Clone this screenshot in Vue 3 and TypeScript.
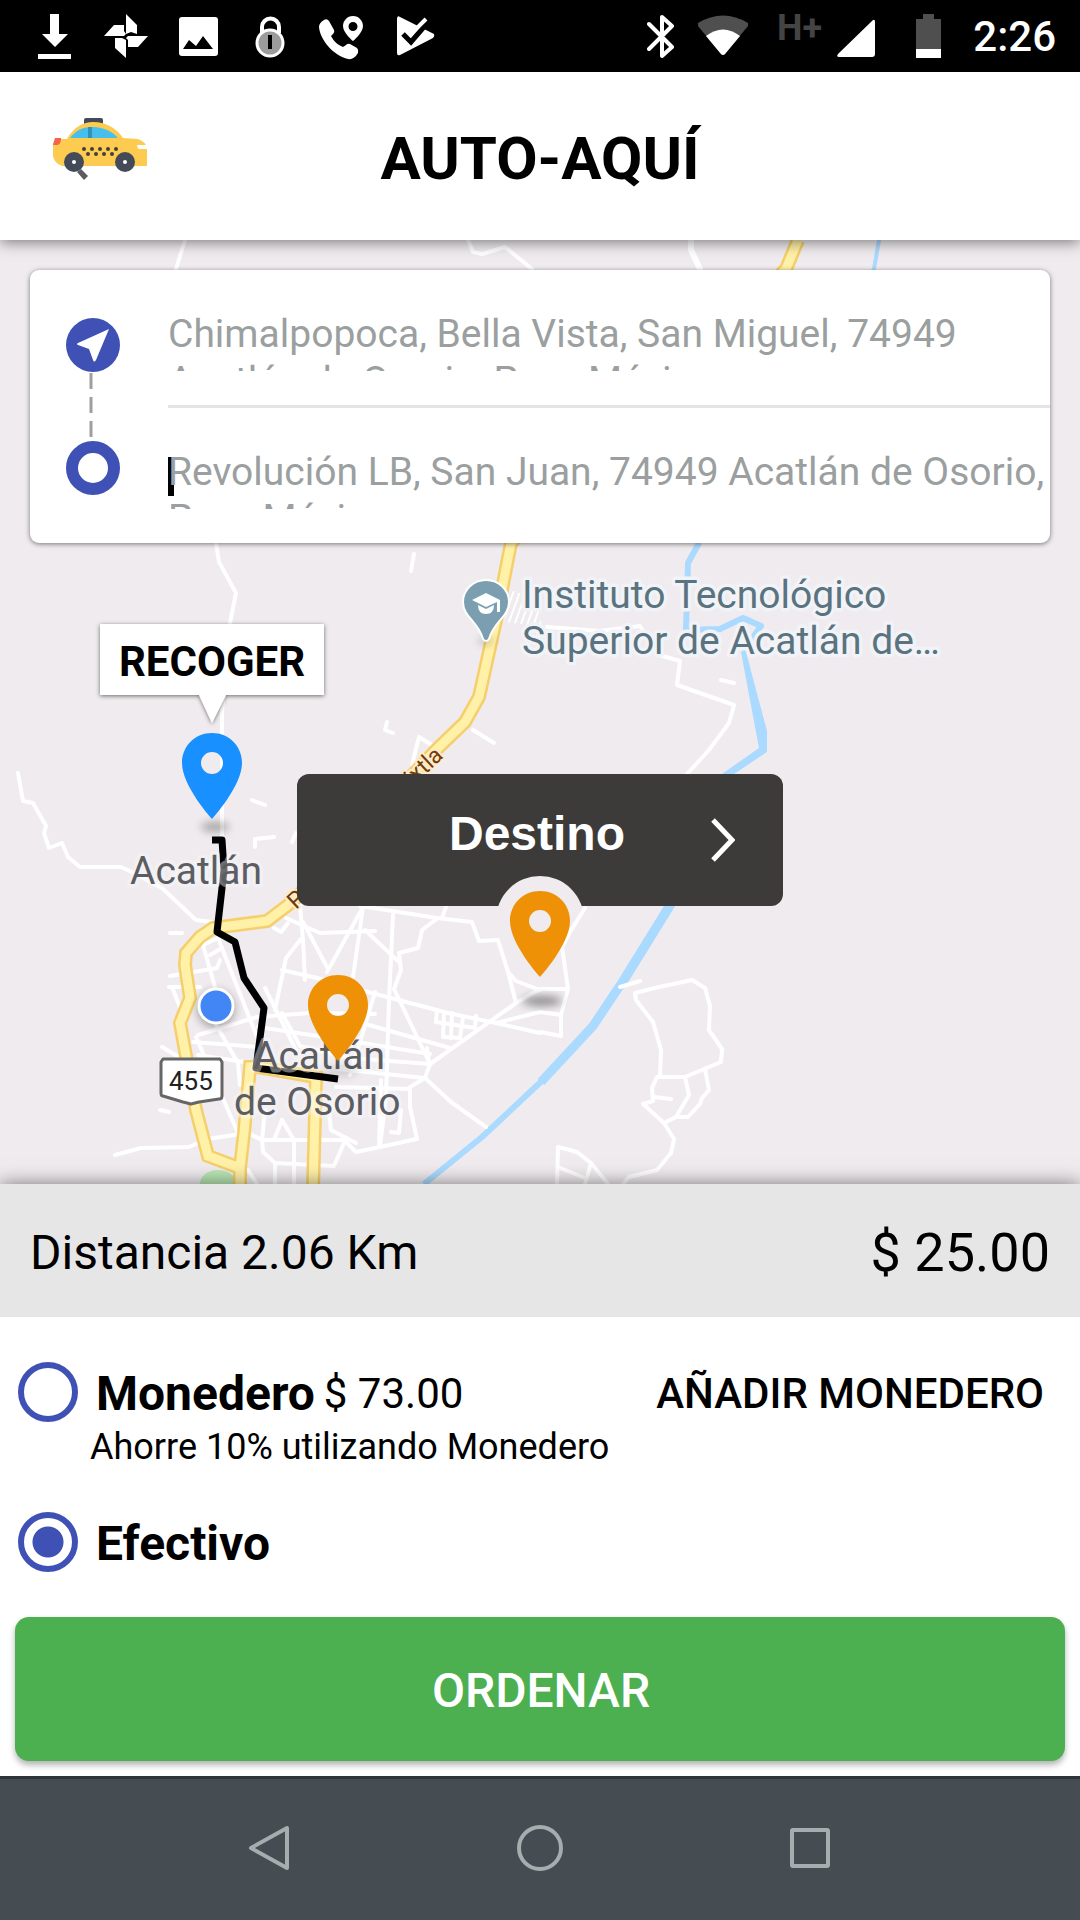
<script setup lang="ts">
import { ref } from 'vue'

type Payment = 'wallet' | 'cash'

const pickup = ref('Chimalpopoca, Bella Vista, San Miguel, 74949 Acatlán de Osorio, Pue., México')
const dropoff = ref('Revolución LB, San Juan, 74949 Acatlán de Osorio, Pue., México')
const payment = ref<Payment>('cash')

const pinShape =
  'M30 0C13 0 0 13 0 30c0 23 30 56 30 56s30-33 30-56C60 13 47 0 30 0zM30 19a11 11 0 1 1 0 22a11 11 0 1 1 0-22z'

// Minor streets, in map coordinates
const streets: string[] = [
  '185,240 176,269',
  '468,240 473,252 482,254 505,247 532,269',
  '216,543 219,562 236,593 230,623 222,713 222,847',
  '414,554 411,571',
  '18,773 23,801 33,803 46,826 44,833 49,848 62,843 68,857 80,867 121,867 138,875 162,888 196,920 212,922',
  '387,722 385,730 393,733',
  '412,765 419,737 435,747',
  '473,730 494,743',
  '252,800 265,805',
  '255,847 255,839 274,837',
  '292,842 296,833',
  '547,627 600,631 640,626 659,655 680,661 677,685 734,705 729,723 709,750 687,774',
  '721,680 734,683',
  '635,993 659,987 692,980 705,988 710,1006 709,1030 722,1049 721,1062 685,1077 660,1077 661,1050 653,1022 636,1000 635,993',
  '660,1077 657,1077 652,1088 653,1101 643,1104 664,1123 674,1139 671,1153 657,1170 629,1177 623,1184',
  '685,1077 689,1095 676,1117 664,1123',
  '705,1069 709,1090 702,1098 700,1104 688,1117 676,1117',
  '654,1097 671,1099',
  '620,987 640,981',
  '557,1184 558,1147 577,1152 591,1163 608,1184',
  '558,1167 585,1178',
  '591,1163 585,1184',
  '585,908 570,932 562,947 568,989 561,1015 561,1036 540,1032',
  '516,1003 540,989 568,989',
  '496,1023 540,1012 561,1015',
  '360,906 437,918 472,922 479,941 498,940 508,972 516,1003 430,1064',
  '508,972 516,981 540,990',
  '438,918 422,930 418,948 399,953 401,970 394,989 430,1064',
  '446,907 442,918',
  '286,918 320,933 375,931',
  '300,906 303,940 305,980',
  '303,922 327,967',
  '363,907 327,972',
  '363,907 353,977',
  '365,930 399,962',
  '393,915 389,1000 386,1097 380,1147',
  '301,939 286,958 275,1010',
  '282,970 317,978 368,992 448,1013 496,1023 540,1033',
  '265,988 296,1050',
  '169,987 200,987',
  '170,976 217,968 220,960',
  '170,933 182,933',
  '172,987 181,1010',
  '203,945 215,987',
  '203,945 218,938 257,1037',
  '210,955 222,948',
  '198,1035 257,1017 310,1013 375,1014',
  '193,1042 258,1047',
  '198,1055 251,1063',
  '215,1023 238,1063 240,1085',
  '162,1047 179,1057',
  '196,1037 238,1133',
  '160,1110 169,1112',
  '115,1155 141,1148 189,1147 207,1139 248,1133 262,1140 344,1140 356,1152 380,1147 417,1139 410,1107 410,1087 425,1078 430,1064',
  '425,1078 451,1102 486,1127',
  '339,1069 424,1078',
  '336,1087 410,1089',
  '262,1140 263,1152 275,1163 334,1166 344,1143',
  '275,1163 275,1184',
  '294,1140 294,1184',
  '282,1120 274,1140',
  '282,1120 294,1140',
  '265,1110 262,1140',
  '381,1080 379,1147',
  '329,1113 331,1130 356,1143',
  '258,1027 344,1040 430,1054',
  '282,1013 300,1046 350,1058 430,1064',
  '362,1023 450,1048',
  '375,992 350,1075',
  '437,1010 436,1022 475,1028 476,1016',
  '444,1013 443,1037 460,1038 463,1017',
  '452,1013 451,1038',
  '427,1048 429,1064',
  '391,1132 399,1133 401,1110',
  '248,1170 257,1184',
  '274,928 281,932 288,923',
]

const highways: string[] = [
  '798,240 786,269 511,543 496,620 479,697 465,722 436,750 296,898 288,905 267,921 213,928 200,937 186,953 185,965 190,998 180,1023 188,1067 196,1110 208,1156 240,1168',
  '240,1190 240,1168 244,1133 250,1067 258,1067 316,1077 313,1190',
]
</script>

<template>
  <div class="screen">
    <div class="status">
      <div class="notices">
        <svg class="notice" viewBox="0 0 48 48"><path d="M20 2h9v20h9L25 35 12 22h8zM8 42h33v5H8z" /></svg>
        <svg class="notice" viewBox="0 0 48 48"><path d="M24 2l11 11v9l-6-2-5 2zM2 24l10-11h10v6l2 3-2 2zM26 24h20L36 35H26v-7l-2-2zM13 26h7l4 2v18L13 36z" /></svg>
        <svg class="notice" viewBox="0 0 48 48"><path fill-rule="evenodd" d="M8 5h33q3 0 3 3v33q0 3-3 3H8q-3 0-3-3V8q0-3 3-3zM9 37h30L29 24l-7 10-7-6z" /></svg>
        <svg class="notice" viewBox="0 0 48 48">
          <path d="M16 21v-6a8 8 0 0 1 17 0v6" fill="none" stroke="#fff" stroke-width="4" />
          <circle cx="24" cy="31" r="13" fill="#9c9c9c" stroke="#fff" stroke-width="3" />
          <path d="M22 23h4v14h-4z" fill="#000" />
        </svg>
        <svg class="notice" viewBox="0 0 48 48">
          <path d="M6 8Q9 6 11 9l5 9q1 2-1 4l-2 2q4 8 12 11l3-2q2-2 4-1l7 4q2 2 1 5-4 7-10 6C16 44 2 28 1 15q0-4 5-7z" />
          <path fill-rule="evenodd" d="M35 4c6 0 10 5 10 10 0 7-10 15-10 15s-10-8-10-15c0-5 4-10 10-10zm0 6a4 4 0 1 0 0 9a4 4 0 1 0 0-9z" />
        </svg>
        <svg class="notice" viewBox="0 0 48 48">
          <path d="M7 7q0-4 3-2l34 17q1 2-1 4L10 43q-3 1-3-2z" />
          <path d="M28 5h20v13h-9z" fill="#000" />
          <path d="M13 22l8 8 18-21" fill="none" stroke="#000" stroke-width="5" />
          <path d="M19 18l3 3L36 7" fill="none" stroke="#fff" stroke-width="4" />
        </svg>
      </div>
      <div class="system">
        <svg width="28" height="48" viewBox="0 0 28 48"><path d="M2 12l23 23-10 9V5l10 9L2 37" fill="none" stroke="#fff" stroke-width="4" stroke-linejoin="round" stroke-linecap="round" /></svg>
        <svg width="52" height="48" viewBox="0 0 52 48">
          <path d="M1 11Q26-4 51 11v3L28 42q-2 2-4 0L1 14z" fill="#4f4f4f" />
          <path d="M9 24q17-13 34 0L28 42q-2 2-4 0z" />
        </svg>
        <svg width="122" height="72" viewBox="0 0 122 72">
          <text x="6" y="40" class="network">H+</text>
          <path d="M102 20q2-1 2 2v32q0 3-3 3H68q-3 0-1-3z" />
        </svg>
        <svg width="26" height="48" viewBox="0 0 26 48">
          <path d="M8 2h11v5h7v31H1V7h7z" fill="#4f4f4f" />
          <path d="M1 37h25v9H1z" />
        </svg>
        <time class="clock">2:26</time>
      </div>
    </div>

    <header class="header">
      <svg class="taxi" viewBox="0 0 96 64" role="img" aria-label="Taxi">
        <path d="M25 55l4-3 7 7-4 4z" fill="#5b5b60" />
        <rect x="32" y="1" width="19" height="8" rx="2" fill="#414a56" />
        <path d="M15 22C22 10 31 5 41 5c14 0 24 7 30 16l15 1q8 3 9 9v18H10q-8-3-9-10V26l3-4z" fill="#fdcb4f" />
        <path d="M18 21C24 13 31 10 41 10c11 0 20 5 25 11z" fill="#46bfec" />
        <path d="M36 10h4v11h-4z" fill="#3192b8" />
        <path d="M3 21h6q0 7-4 7H1z" fill="#f4614c" />
        <path d="M85 28h10v4H87q-2-1-2-4z" fill="#fff" />
        <g fill="#413f3d">
          <circle cx="32" cy="32" r="2" /><circle cx="40" cy="32" r="2" /><circle cx="48" cy="32" r="2" /><circle cx="56" cy="32" r="2" /><circle cx="64" cy="32" r="2" />
          <circle cx="36" cy="37" r="2" /><circle cx="44" cy="37" r="2" /><circle cx="52" cy="37" r="2" /><circle cx="60" cy="37" r="2" />
        </g>
        <circle cx="22" cy="45" r="10" fill="#434b58" /><circle cx="22" cy="45" r="2" fill="#fff" />
        <circle cx="73" cy="45" r="10" fill="#434b58" /><circle cx="73" cy="45" r="2" fill="#fff" />
      </svg>
      <h1 class="title">AUTO-AQUÍ</h1>
    </header>

    <main class="map">
      <svg class="canvas" viewBox="0 240 1080 944" preserveAspectRatio="xMidYMin slice">
        <defs>
          <filter id="soft" x="-50%" y="-100%" width="200%" height="300%"><feGaussianBlur stdDeviation="4" /></filter>
          <filter id="lift" x="-20%" y="-20%" width="140%" height="140%"><feDropShadow dx="0" dy="1" stdDeviation="2" flood-opacity="0.55" /></filter>
          <pattern id="hatch" width="6" height="6" patternUnits="userSpaceOnUse" patternTransform="rotate(20)">
            <path d="M0 0v6" stroke="#fff" stroke-width="4" />
          </pattern>
        </defs>
        <ellipse cx="218" cy="1184" rx="18" ry="14" fill="#b9e6b4" />
        <path d="M510 590l26 8 6 28-38-4z" fill="url(#hatch)" />
        <g class="river">
          <polyline points="879,240 874,269 699,543" stroke-width="4" />
          <polyline points="699,543 688,563 686,630 720,629 743,618 761,626 743,652" stroke-width="6" />
          <path d="M741 652h5l21 79v21l-33 22h-12l37-26z" fill="#aadaff" stroke="none" />
          <polyline points="728,774 670,906 623,982" stroke-width="9" />
          <polyline points="668,908 621,984 593,1026 541,1082" stroke-width="9" />
          <polyline points="545,1078 482,1137 424,1184" stroke-width="6" />
        </g>
        <polyline points="691,240 691,250 700,269" class="street" stroke-width="6" />
        <polyline v-for="(line, i) in streets" :key="i" :points="line" class="street" stroke-width="4" />
        <polyline v-for="line in highways" :key="'edge' + line" :points="line" class="highway-edge" />
        <polyline v-for="line in highways" :key="line" :points="line" class="highway" />

        <g class="road-name">
          <text transform="translate(413 786) rotate(-43)">ixtla</text>
          <text transform="translate(296 910) rotate(-43)">P</text>
        </g>
        <polyline class="route" points="212,840 222,840 224,870 222,888 217,932 235,942 244,978 264,1008 256,1068 338,1079" />

        <g class="place">
          <text x="130" y="884">Acatlán</text>
          <text x="253" y="1069">Acatlán</text>
          <text x="234" y="1115">de Osorio</text>
        </g>
        <g class="school">
          <text x="522" y="608">Instituto Tecnológico</text>
          <text x="522" y="654">Superior de Acatlán de…</text>
        </g>

        <ellipse cx="486" cy="641" rx="8" ry="3" fill="#000" opacity="0.25" filter="url(#soft)" />
        <path d="M486 580c13 0 23 10 23 22 0 15-15 19-20 37q-3 4-6 0c-5-18-20-22-20-37 0-12 10-22 23-22z" fill="#7b9fb0" stroke="#fff" stroke-width="2" />
        <path d="M472 600l14-7 14 7v12h-3v-10l-11 5zM478 605l8 4 8-4q0 9-8 9t-8-9z" fill="#fff" />

        <path d="M163 1059h57l2 3v34q0 3-3 3l-20 3-8 2-8-2-20-6q-2 0-2-3v-31z" fill="#fff" stroke="#666" stroke-width="3" stroke-linejoin="round" />
        <text x="169" y="1090" class="shield">455</text>

        <circle cx="216" cy="1009" r="19" opacity="0.3" filter="url(#soft)" />
        <circle cx="216" cy="1006" r="17" fill="#4285f4" stroke="#fff" stroke-width="3" />

        <ellipse cx="340" cy="1071" rx="18" ry="5" opacity="0.15" filter="url(#soft)" />
        <path :d="pinShape" transform="translate(308 975)" fill="#ee9106" fill-rule="evenodd" />

        <ellipse cx="215" cy="827" rx="14" ry="5" opacity="0.3" filter="url(#soft)" />
        <path :d="pinShape" transform="translate(182 733)" fill="#1890ff" fill-rule="evenodd" />
        <path d="M100 624h224v71h-98l-14 28-13-28h-99z" fill="#fff" filter="url(#lift)" />
        <text x="212" y="676" text-anchor="middle" class="callout">RECOGER</text>
      </svg>

      <form class="trip" @submit.prevent>
        <div class="rail">
          <svg class="stop" viewBox="0 0 54 54">
            <circle cx="27" cy="27" r="27" fill="#3f51b5" />
            <path d="M43 11L30 42q-2 3-3 0l-4-11-11-4q-2-1 0-2z" fill="#fff" />
          </svg>
          <svg class="dashes" viewBox="0 0 54 69"><path d="M25 1v16M25 25v16M25 49v16" stroke="#9e9e9e" stroke-width="3" /></svg>
          <svg class="stop" viewBox="0 0 54 54"><circle cx="27" cy="27" r="21" fill="#fff" stroke="#3f51b5" stroke-width="12" /></svg>
        </div>
        <div class="fields">
          <div class="field"><textarea v-model="pickup" aria-label="Origen" spellcheck="false"></textarea></div>
          <div class="field focused"><textarea v-model="dropoff" aria-label="Destino" spellcheck="false"></textarea></div>
        </div>
      </form>

      <button class="destination" type="button">
        Destino
        <svg class="chevron" viewBox="0 0 24 44"><path d="M2 2l19 20L2 42" fill="none" stroke="#fff" stroke-width="5" /></svg>
      </button>
      <svg class="center-pin" viewBox="0 0 80 120">
        <ellipse cx="42" cy="110" rx="20" ry="5" opacity="0.4" filter="url(#soft)" />
        <path :d="pinShape" transform="translate(10 0)" fill="#ee9106" fill-rule="evenodd" />
      </svg>
    </main>

    <section class="fare">
      <span class="distance">Distancia 2.06 Km</span>
      <span class="price">$ 25.00</span>
    </section>

    <section class="payment">
      <div class="option">
        <input id="wallet" v-model="payment" type="radio" name="payment" value="wallet" />
        <label for="wallet">Monedero</label>
        <span class="balance">$ 73.00</span>
        <button class="add" type="button">AÑADIR MONEDERO</button>
      </div>
      <p class="hint">Ahorre 10% utilizando Monedero</p>
      <div class="option">
        <input id="cash" v-model="payment" type="radio" name="payment" value="cash" />
        <label for="cash">Efectivo</label>
      </div>
      <button class="order" type="button">ORDENAR</button>
    </section>

    <nav class="nav">
      <button type="button" aria-label="Atrás"><svg viewBox="0 0 48 48"><path d="M41 4v40L5 24z" /></svg></button>
      <button type="button" aria-label="Inicio"><svg viewBox="0 0 48 48"><circle cx="24" cy="24" r="21" /></svg></button>
      <button type="button" aria-label="Recientes"><svg viewBox="0 0 48 48"><rect x="6" y="6" width="36" height="36" rx="1" /></svg></button>
    </nav>
  </div>
</template>

<style>
body {
  margin: 0;
}
</style>

<style scoped>
.screen {
  display: flex;
  flex-direction: column;
  min-height: 100vh;
  overflow: hidden;
  background: #fff;
  color: #000;
  font-family: Roboto, 'Liberation Sans', sans-serif;
}

button {
  border: 0;
  padding: 0;
  font-family: inherit;
  color: inherit;
  background: none;
}

.status {
  display: flex;
  align-items: center;
  justify-content: space-between;
  height: 72px;
  padding: 0 24px 0 30px;
  background: #000;
  color: #fff;
}

.status svg {
  fill: #fff;
}

.notices {
  display: flex;
  gap: 24px;
}

.notice {
  width: 48px;
  height: 48px;
}

.system {
  display: flex;
  align-items: center;
  gap: 22px;
}

.status .network {
  font-size: 36px;
  font-weight: 700;
  fill: #444;
}

.clock {
  margin-left: 10px;
  font-size: 42px;
  font-weight: 500;
}

.header {
  position: relative;
  z-index: 2;
  display: grid;
  grid-template-columns: 1fr auto 1fr;
  align-items: center;
  box-sizing: border-box;
  height: 168px;
  padding: 0 52px;
  background: #fff;
  box-shadow: 0 2px 14px rgba(0, 0, 0, 0.5);
}

.taxi {
  width: 96px;
  height: 64px;
  margin-bottom: 14px;
}

.title {
  margin: 4px 0 0;
  font-size: 60px;
  font-weight: 700;
}

.map {
  position: relative;
  flex: 1;
  min-height: 900px;
  overflow: hidden;
  background: #efebee;
}

.canvas {
  position: absolute;
  inset: 0;
  width: 100%;
  height: 100%;
}

.river polyline {
  fill: none;
  stroke: #aadaff;
  stroke-linejoin: round;
}

.street {
  fill: none;
  stroke: #fff;
  stroke-linejoin: round;
  stroke-linecap: round;
}

.highway-edge {
  fill: none;
  stroke: #f5cf6b;
  stroke-width: 14px;
}

.highway {
  fill: none;
  stroke: #fff1a8;
  stroke-width: 9px;
}

.route {
  fill: none;
  stroke: #000;
  stroke-width: 7px;
  stroke-linejoin: round;
}

.road-name {
  font-size: 23px;
  fill: #723b08;
  stroke: #fdeccb;
  stroke-width: 4px;
  paint-order: stroke;
}

.place {
  font-size: 39px;
  fill: #5b5d62;
  stroke: rgba(250, 248, 250, 0.45);
  stroke-width: 7px;
  stroke-linejoin: round;
  paint-order: stroke;
}

.school {
  font-size: 39px;
  fill: #5a737e;
  stroke: #f1f3f8;
  stroke-width: 7px;
  stroke-linejoin: round;
  paint-order: stroke;
}

.shield {
  font-size: 26px;
  fill: #222;
}

.callout {
  font-size: 42px;
  font-weight: 700;
}

.trip {
  position: relative;
  display: flex;
  margin: 30px 30px 0;
  overflow: hidden;
  border-radius: 9px;
  background: #fff;
  box-shadow: 0 1px 5px rgba(0, 0, 0, 0.5);
}

.rail {
  display: flex;
  flex-direction: column;
  box-sizing: border-box;
  width: 138px;
  padding: 48px 0 0 36px;
}

.stop {
  width: 54px;
  height: 54px;
}

.dashes {
  width: 54px;
  height: 69px;
}

.fields {
  flex: 1;
}

.field {
  position: relative;
  padding: 41px 0 34px;
}

.field + .field {
  border-top: 3px solid #e4e4e4;
}

.field textarea {
  position: relative;
  display: block;
  box-sizing: border-box;
  width: 100%;
  height: 60px;
  padding: 0;
  border: 0;
  outline: 0;
  overflow: hidden;
  resize: none;
  background: none;
  color: #9b9f9f;
  font-family: inherit;
  font-size: 39px;
  line-height: 47px;
}

.focused::before {
  content: '';
  position: absolute;
  top: 49px;
  left: 0;
  width: 6px;
  height: 39px;
  background: #000;
}

.destination {
  position: absolute;
  top: 534px;
  left: 50%;
  width: 486px;
  height: 132px;
  padding: 0 6px 14px 0;
  transform: translateX(-50%);
  overflow: hidden;
  border-radius: 12px;
  background: #3d3b39;
  color: #fff;
  font-family: 'Liberation Sans', Arial, sans-serif;
  font-size: 48px;
  font-weight: 700;
}

.destination::after {
  content: '';
  position: absolute;
  bottom: -58px;
  left: 50%;
  width: 88px;
  height: 88px;
  margin-left: -44px;
  border-radius: 50%;
  background: #efebee;
}

.chevron {
  position: absolute;
  top: 44px;
  right: 48px;
  width: 24px;
  height: 44px;
}

.center-pin {
  position: absolute;
  top: 651px;
  left: 50%;
  width: 80px;
  height: 120px;
  margin-left: -40px;
  pointer-events: none;
}

.fare {
  position: relative;
  display: flex;
  align-items: center;
  justify-content: space-between;
  box-sizing: border-box;
  min-height: 133px;
  padding: 4px 30px 0;
  background: #e6e6e6;
  box-shadow: 0 0 18px rgba(0, 0, 0, 0.5);
}

.distance {
  font-size: 48px;
}

.price {
  font-size: 54px;
}

.payment {
  position: relative;
  display: flex;
  flex-direction: column;
  padding: 45px 15px 15px;
  background: #fff;
}

.option {
  display: flex;
  align-items: center;
  height: 62px;
  padding: 0 21px 0 3px;
}

.option input {
  flex: none;
  align-self: flex-start;
  box-sizing: border-box;
  width: 60px;
  height: 60px;
  margin: 0 18px 0 0;
  appearance: none;
  border: 6px solid #3f51b5;
  border-radius: 50%;
  background: #fff;
}

.option input:checked {
  background: radial-gradient(circle, #3f51b5 15px, #fff 16px);
}

.option label {
  font-size: 48px;
  font-weight: 700;
}

.balance {
  margin-left: 9px;
  font-size: 42px;
}

.add {
  margin-left: auto;
  font-size: 42px;
  font-weight: 500;
}

.hint {
  margin: 2px 0 44px;
  padding-left: 75px;
  font-size: 36px;
  line-height: 42px;
}

.order {
  height: 144px;
  margin-top: 43px;
  padding: 2px 0 0 2px;
  border-radius: 14px;
  background: #4caf50;
  box-shadow: 0 4px 6px rgba(0, 0, 0, 0.3);
  color: #fff;
  font-size: 48px;
  font-weight: 500;
}

.nav {
  position: relative;
  display: flex;
  align-items: center;
  justify-content: center;
  gap: 222px;
  box-sizing: border-box;
  height: 144px;
  padding-bottom: 3px;
  border-top: 3px solid #2c353a;
  background: #454c52;
}

.nav button {
  width: 48px;
  height: 48px;
}

.nav svg {
  display: block;
  fill: none;
  stroke: #a7acaf;
  stroke-width: 4px;
  stroke-linejoin: round;
}
</style>
